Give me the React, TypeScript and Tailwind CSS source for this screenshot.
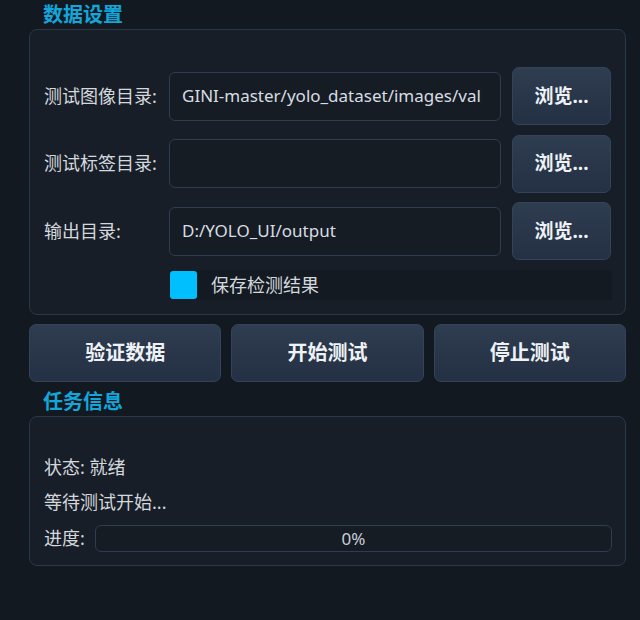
import React from "react";

const cjk = { fontFamily: '"Noto Sans", "Noto Sans CJK SC", sans-serif' };

function Row({ label, value }: { label: string; value: string }) {
  return (
    <div className="flex h-[58px] items-center">
      <div className="w-[125px] text-[18px] text-[#d3d8de]">{label}</div>
      <div className="flex h-[49px] w-[332px] items-center rounded-[6px] border border-[#2e3d4f] bg-[#161c24] pl-[12px] text-[17px] text-[#d8dde3]">
        {value}
      </div>
      <button className="ml-[11px] flex h-[58px] w-[99px] items-center justify-center rounded-[7px] border border-[#33445a] bg-gradient-to-b from-[#2f3d50] to-[#243043] text-[19px] font-bold text-[#eef2f6]">
        浏览...
      </button>
    </div>
  );
}

function Btn({ children }: { children: React.ReactNode }) {
  return (
    <button className="flex h-[58px] flex-1 items-center justify-center rounded-[7px] border border-[#33445a] bg-gradient-to-b from-[#2f3d50] to-[#243043] text-[20px] font-bold text-[#eef2f6]">
      {children}
    </button>
  );
}

export default function App() {
  return (
    <div className="h-[620px] w-[640px] bg-[#131920] pl-[29px] pr-[14px]" style={cjk}>
      <div className="flex h-[29px] items-center pl-[14px] text-[20px] font-bold leading-none text-[#12a6da]">
        数据设置
      </div>
      <div className="flex h-[286px] flex-col rounded-[8px] border border-[#2a394a] bg-[#181e27] pl-[14px] pr-[13px] pt-[37px]">
        <div className="flex flex-col gap-[9.5px]">
          <Row label="测试图像目录:" value="GINI-master/yolo_dataset/images/val" />
          <Row label="测试标签目录:" value="" />
          <Row label="输出目录:" value="D:/YOLO_UI/output" />
        </div>
        <div className="ml-[125px] mt-[10px] flex h-[30px] items-center gap-[14px] bg-[#141a21]">
          <div className="ml-[1px] h-[28px] w-[27px] rounded-[3px] bg-[#00bfff]" />
          <span className="text-[18px] text-[#d3d8de]">保存检测结果</span>
        </div>
      </div>
      <div className="mt-[9px] flex gap-[10px]">
        <Btn>验证数据</Btn>
        <Btn>开始测试</Btn>
        <Btn>停止测试</Btn>
      </div>
      <div className="flex h-[34px] items-center pl-[14px] pt-[6px] text-[20px] font-bold leading-none text-[#12a6da]">
        任务信息
      </div>
      <div className="flex h-[150px] flex-col rounded-[8px] border border-[#2a394a] bg-[#181e27] pl-[14px] pr-[13px] pt-[38px] text-[18px] text-[#d3d8de]">
        <div className="h-[25px] leading-[25px]">状态: 就绪</div>
        <div className="mt-[10px] h-[25px] leading-[25px]">等待测试开始...</div>
        <div className="mt-[10px] flex items-center">
          <span className="w-[51px]">进度:</span>
          <div className="flex h-[27px] flex-1 items-center justify-center rounded-[6px] border border-[#2e3d4f] bg-[#161c24] text-[17px] text-[#c7cfd8]">
            0%
          </div>
        </div>
      </div>
    </div>
  );
}
